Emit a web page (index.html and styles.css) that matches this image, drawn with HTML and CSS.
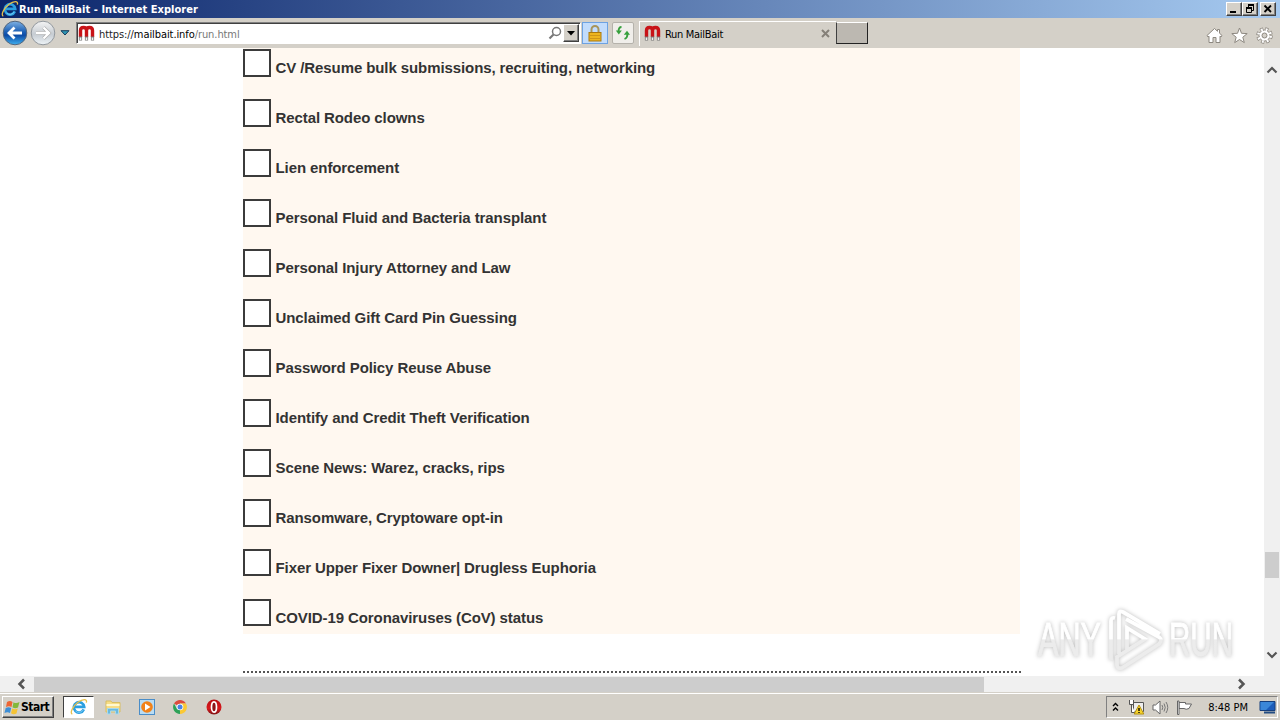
FILE: index.html
```html
<!DOCTYPE html>
<html lang="en">
<head>
    <meta charset="UTF-8">
    <title>Run MailBait - Internet Explorer</title>
    <link rel="stylesheet" href="styles.css">
</head>
<body>
    <svg class="defs" width="0" height="0">
        <defs>
            <linearGradient id="red" x1="0" y1="0" x2="0" y2="1">
                <stop offset="0" stop-color="#b80e12"/>
                <stop offset=".6" stop-color="#d8181c"/>
                <stop offset="1" stop-color="#7c1414"/>
            </linearGradient>
            <linearGradient id="blue" x1="0" y1="0" x2="0" y2="1">
                <stop offset="0" stop-color="#7fb2e4"/>
                <stop offset=".45" stop-color="#1c5fb4"/>
                <stop offset=".6" stop-color="#0c4ba6"/>
                <stop offset="1" stop-color="#3fb0f0"/>
            </linearGradient>
            <linearGradient id="silver" x1="0" y1="0" x2="0" y2="1">
                <stop offset="0" stop-color="#f4f4f4"/>
                <stop offset=".55" stop-color="#c6ccd2"/>
                <stop offset="1" stop-color="#eef4f8"/>
            </linearGradient>
            <linearGradient id="fade" gradientUnits="userSpaceOnUse" x1="0" y1="0" x2="0" y2="64">
                <stop offset=".48" stop-color="#fff"/>
                <stop offset=".5" stop-color="#ececec"/>
            </linearGradient>
            <symbol id="ie" viewBox="0 0 18 18">
                <path d="M13.800 11.400A5.200 5.200 0 1 1 14.200 8.900H5" fill="none" stroke="#2a9fe0" stroke-width="2.700"/>
                <path d="M13.300 11.800A4.900 4.900 0 0 1 5.500 13" fill="none" stroke="#8bd4f7" stroke-width=".8"/>
                <path d="M2.300 16.300C-.5 14.500 3 8.200 8 4.300C12.500.9 17.700.3 16.300 4.600" fill="none" stroke="#e6c04c" stroke-width="1.300"/>
            </symbol>
            <symbol id="magnet" viewBox="0 0 17 17">
                <path d="M2.500 12V5.500Q2.500 2.500 5.500 2.500Q8.500 2.500 8.500 5.500V12M8.500 5.500Q8.500 2.500 11.500 2.500Q14.500 2.500 14.500 5.500V12" fill="none" stroke="#c81318" stroke-width="3.400"/>
                <path d="M2.500 11.500V15.500M8.500 11.500V15.500M14.500 11.500V15.500" stroke="#777" stroke-width="3.200"/>
                <path d="M2.500 12.500V15M8.500 12.500V15M14.500 12.500V15" stroke="#eee" stroke-width="1.600"/>
            </symbol>
        </defs>
    </svg>

    <header class="titlebar">
        <svg class="title-icon" width="18" height="18"><use href="#ie"/></svg>
        <h1 class="title">Run MailBait - Internet Explorer</h1>
        <div class="win-buttons">
            <button class="win-btn"><svg width="14" height="12"><path d="M3 9H9" stroke="#000" stroke-width="2"/></svg></button>
            <button class="win-btn"><svg width="14" height="12"><path d="M5 2.500H11M10.500 2V7.500H9M5.500 2V4M3 5.500H9M3.500 5V9.500H8.500V5" fill="none" stroke="#000"/><path d="M5 2H11M3 5H9" stroke="#000" stroke-width="2"/></svg></button>
            <button class="win-btn close"><svg width="14" height="12"><path d="M3.500 2.500L10 9M10 2.500L3.500 9" stroke="#000" stroke-width="1.800"/></svg></button>
        </div>
    </header>

    <nav class="toolbar">
        <svg class="nav-icon" width="26" height="26" viewBox="0 0 26 26">
            <circle cx="13" cy="13" r="11.800" fill="url(#blue)" stroke="#52657c"/>
            <path d="M20 13H7.500M12.500 7.500L7 13L12.500 18.500" fill="none" stroke="#fff" stroke-width="2.800"/>
        </svg>
        <svg class="nav-icon" width="26" height="26" viewBox="0 0 26 26">
            <circle cx="13" cy="13" r="11.800" fill="url(#silver)" stroke="#92989e"/>
            <path d="M6 13H18.500M13.500 7.500L19 13L13.500 18.500" fill="none" stroke="#aaa" stroke-width="3.600"/>
            <path d="M6 13H18.500M13.500 7.500L19 13L13.500 18.500" fill="none" stroke="#fff" stroke-width="2.400"/>
        </svg>
        <svg class="nav-drop" width="10" height="6"><path d="M1 .7H9L5 5Z" fill="#2e96b4" stroke="#163c5c"/></svg>
        <div class="address">
            <svg class="favicon" width="17" height="17"><use href="#magnet"/></svg>
            <span class="url"><i>https://</i>mailbait.info<i>/run.html</i></span>
            <svg class="search" width="14" height="14"><circle cx="8.500" cy="5.500" r="4" fill="#fff" stroke="#777" stroke-width="1.500"/><path d="M5.500 8.500L1.500 12.500" stroke="#777" stroke-width="2.200"/></svg>
            <span class="drop-btn"><svg width="8" height="5"><path d="M0 0H8L4 4.500Z"/></svg></span>
        </div>
        <span class="lock">
            <svg width="14" height="17" viewBox="0 0 14 17"><path d="M3.500 8V4.500A3.500 3.500 0 0 1 10.500 4.500V8" fill="none" stroke="#a8955a" stroke-width="2"/><rect x="1" y="7.500" width="12" height="8.500" fill="#edb51f" stroke="#aa780e"/><path d="M1.500 10.500H12.500M1.500 13.500H12.500" stroke="#cf9618"/></svg>
        </span>
        <span class="refresh">
            <svg width="16" height="14"><path d="M6.500 1Q3.500 1 3.500 6" fill="none" stroke="#36a03c" stroke-width="1.800"/><path d="M.8 4.500H6.800L3.800 8.500Z" fill="#36a03c"/><path d="M9.500 13Q12.500 12 12.500 8" fill="none" stroke="#36a03c" stroke-width="1.800"/><path d="M8.800 8.700H15L12 4.700Z" fill="#36a03c"/></svg>
        </span>
        <div class="tab">
            <svg width="17" height="17"><use href="#magnet"/></svg>
            <span class="tab-name">Run MailBait</span>
            <svg class="tab-close" width="9" height="9"><path d="M1 1L8 8M8 1L1 8" stroke="#858078" stroke-width="2"/></svg>
        </div>
        <span class="new-tab"></span>
        <div class="tools">
            <svg width="17" height="17"><path d="M1 8.500L8.500 1.500L11.500 4.300V2.500H13.500V6.200L16 8.500L15 10L14 9.200V15.500H10V10.500H7V15.500H3V9.200L2 10Z" fill="#fff" stroke="#8d8880"/></svg>
            <svg width="17" height="17"><path d="M8.500 1L10.500 6.300L16.200 6.600L11.800 10.200L13.300 15.600L8.500 12.500L3.700 15.600L5.200 10.200L.8 6.600L6.500 6.300Z" fill="#fff" stroke="#8d8880"/></svg>
            <svg width="17" height="17" viewBox="0 0 17 17">
                <circle cx="8.500" cy="8.500" r="6.500" fill="none" stroke="#8d8880" stroke-width="3.500" stroke-dasharray="3 2.105"/>
                <circle cx="8.500" cy="8.500" r="5.500" fill="#fff" stroke="#8d8880"/>
                <circle cx="8.500" cy="8.500" r="6.200" fill="none" stroke="#fff" stroke-width="2.600" stroke-dasharray="1.800 3.070" stroke-dashoffset="-.5"/>
                <circle cx="8.500" cy="8.500" r="2.500" fill="#d4d0c8" stroke="#8d8880"/>
            </svg>
        </div>
    </nav>

    <div class="viewport">
        <main class="page">
            <ul class="topics">
                <li><span class="check"></span><label>CV /Resume bulk submissions, recruiting, networking</label></li>
                <li><span class="check"></span><label>Rectal Rodeo clowns</label></li>
                <li><span class="check"></span><label>Lien enforcement</label></li>
                <li><span class="check"></span><label>Personal Fluid and Bacteria transplant</label></li>
                <li><span class="check"></span><label>Personal Injury Attorney and Law</label></li>
                <li><span class="check"></span><label>Unclaimed Gift Card Pin Guessing</label></li>
                <li><span class="check"></span><label>Password Policy Reuse Abuse</label></li>
                <li><span class="check"></span><label>Identify and Credit Theft Verification</label></li>
                <li><span class="check"></span><label>Scene News: Warez, cracks, rips</label></li>
                <li><span class="check"></span><label>Ransomware, Cryptoware opt-in</label></li>
                <li><span class="check short"></span><label>Fixer Upper Fixer Downer| Drugless Euphoria</label></li>
                <li><span class="check short"></span><label>COVID-19 Coronaviruses (CoV) status</label></li>
            </ul>
            <div class="divider"></div>
        </main>
        <div class="vscroll">
            <svg width="12" height="8"><path d="M1.500 6.500L6 2L10.500 6.500" fill="none" stroke="#555" stroke-width="2.200"/></svg>
            <span class="vthumb"></span>
            <svg width="12" height="8"><path d="M1.500 1.500L6 6L10.500 1.500" fill="none" stroke="#555" stroke-width="2.200"/></svg>
        </div>
        <svg class="watermark" width="200" height="64" viewBox="0 0 200 64">
            <g fill="url(#fade)" stroke="url(#fade)">
                <text x="1" y="48" textLength="63" lengthAdjust="spacingAndGlyphs">ANY</text>
                <text x="132" y="48" textLength="64" lengthAdjust="spacingAndGlyphs">RUN</text>
            </g>
            <path d="M74 52V13Q74 9 78 10M82 46V6Q82 2 86 4L123 26M90 43V20L108 31L80 49V57Q80 61 85 60L122 36Q126 32 122 29L89 11" fill="none" stroke="url(#fade)" stroke-width="3.800"/>
        </svg>
    </div>

    <div class="hscroll">
        <svg width="10" height="12"><path d="M8 1.500L3.500 6L8 10.500" fill="none" stroke="#555" stroke-width="2.500"/></svg>
        <span class="hthumb"></span>
        <svg class="right" width="10" height="12"><path d="M2 1.500L6.500 6L2 10.500" fill="none" stroke="#555" stroke-width="2.500"/></svg>
    </div>

    <footer class="taskbar">
        <button class="start">
            <svg width="17" height="17" viewBox="0 0 17 17">
                <path d="M3 3Q6 1 8.500 3L7.500 8Q5 6.500 2 8Z" fill="#ed6534"/>
                <path d="M9.500 3.200Q12 5 15.500 3L14 8.500Q11 10 8.500 8.300Z" fill="#83b83b"/>
                <path d="M1.700 9Q4.500 7.500 7.200 9L6 14Q3.500 12.500.5 14Z" fill="#3d8ed6"/>
                <path d="M8.200 9.400Q11 11 13.700 9.500L12.500 14.500Q9.500 16 7 14.300Z" fill="#f5c334"/>
            </svg>
            <span>Start</span>
        </button>
        <div class="task active"><svg width="18" height="18"><use href="#ie"/></svg></div>
        <svg class="task-icon folder" width="16" height="16"><path d="M1 2H6L7 3.500H15V13H1Z" fill="#f7dd85" stroke="#d8bd62"/><path d="M1.500 6H14.500" stroke="#fff8cf" stroke-width="2"/><path d="M2.500 15V9.500H13.500V15H10.500V12H5.500V15Z" fill="#69b9df" stroke="#a9d9ec"/></svg>
        <svg class="task-icon player" width="16" height="16"><rect x=".5" y=".5" width="15" height="15" fill="#b9dcf3" stroke="#4a8dc8"/><circle cx="8" cy="8" r="5.800" fill="#f28218"/><path d="M6 4.500L11.500 8L6 11.500Z" fill="#fff"/></svg>
        <svg class="task-icon chrome" width="14" height="14" viewBox="0 0 14 14"><path d="M7 7L1 3.500A7 7 0 0 1 13 3.500H7Z" fill="#dd4b3e"/><path d="M7 7L7 3.500H13A7 7 0 0 1 7 14Z" fill="#fbc934"/><path d="M7 7L7 14A7 7 0 0 1 1 3.500L4 9Z" fill="#2da158"/><circle cx="7" cy="7" r="3.300" fill="#fff"/><circle cx="7" cy="7" r="2.500" fill="#4a83e5"/></svg>
        <svg class="task-icon opera" width="16" height="16"><circle cx="8" cy="8" r="7.500" fill="url(#red)"/><ellipse cx="8" cy="8" rx="2.500" ry="5.200" fill="#8c1518" stroke="#fff" stroke-width="1.700"/></svg>
        <div class="tray">
            <svg class="chevrons" width="7" height="10"><path d="M1 4L3.500 1.500L6 4M1 8.500L3.500 6L6 8.500" fill="none" stroke="#000" stroke-width="1.400"/></svg>
            <svg class="net" width="17" height="16"><path d="M5.500 3.500H15.500V12.500H5.500Z" fill="#eee" stroke="#555"/><path d="M1.500 1V5.500H5.500V1M3.500 5V13.500H7" fill="#fff" stroke="#555"/><path d="M11 6L15.800 15H6.200Z" fill="#f6d32c" stroke="#b49112"/><path d="M11 9V12M11 13V14" stroke="#000" stroke-width="1.400"/></svg>
            <svg class="sound" width="17" height="15"><path d="M1 5H3.500L8 1V14L3.500 10H1Z" fill="#fff" stroke="#666"/><path d="M10 5Q11.500 7.500 10 10M12 3.500Q14.500 7.500 12 11.500M14 2Q17.500 7.500 14 13" fill="none" stroke="#777"/></svg>
            <svg class="flag" width="17" height="15"><path d="M3 2.500H9.500V4H15.500L13 8.500Q10 10 8 8.500H3Z" fill="#fff" stroke="#666"/><path d="M1.500 1V14.500H3V1Z" fill="#fff" stroke="#666"/></svg>
            <time>8:48 PM</time>
            <svg class="desktop" width="17" height="14"><path d="M1 1.500H16V10.500H1Z" fill="#1b5cba" stroke="#153e7c"/><path d="M1.500 2H15L7 10H1.500Z" fill="#3b87d8"/><path d="M5 12.500H16" stroke="#234c82" stroke-width="2"/></svg>
        </div>
    </footer>
</body>
</html>
```
FILE: styles.css
```css
*{
    margin: 0;
    padding: 0;
    box-sizing: border-box;
}

body{
    width: 1280px;
    height: 720px;
    overflow: hidden;
    display: flex;
    flex-direction: column;
    background: #fff;
    font: 11px "DejaVu Sans Condensed", "DejaVu Sans", sans-serif;
    color: #000;
}

svg{
    display: block;
    flex-shrink: 0;
}

.defs{
    position: absolute;
}

/* window caption */
.titlebar{
    height: 18px;
    flex-shrink: 0;
    display: flex;
    align-items: center;
    padding: 0 4px 0 1px;
    background: linear-gradient(to right, #0a246a, #a6caf0);
}

.title{
    font-size: 11px;
    letter-spacing: 0.04px;
    color: #fff;
    white-space: nowrap;
}

.win-buttons{
    display: flex;
    margin-left: auto;
}

.win-btn{
    width: 16px;
    height: 14px;
    background: #d4d0c8;
    border: 1px solid;
    border-color: #fff #404040 #404040 #fff;
    box-shadow: inset -1px -1px #808080;
}

.close{
    margin-left: 2px;
}

/* address bar and tabs */
.toolbar{
    height: 30px;
    flex-shrink: 0;
    display: flex;
    align-items: center;
    padding: 0 8px 0 2px;
    background: #d4d0c8;
}

.nav-icon{
    margin-right: 2px;
}

.nav-drop{
    margin-left: 2px;
}

.address{
    width: 505px;
    height: 22px;
    margin-left: 6px;
    display: flex;
    align-items: center;
    padding: 0 1px;
    background: #fff;
    border: 1px solid;
    border-color: #808080 #fff #fff #808080;
    box-shadow: inset 1px 1px #404040;
}

.url{
    margin-left: 4px;
    padding-top: 2px;
    letter-spacing: -0.08px;
}

.url i{
    font-style: normal;
    color: #777;
}

.url i:first-child{
    color: #222;
}

.search{
    margin-left: auto;
}

.drop-btn{
    width: 16px;
    height: 18px;
    margin-left: 1px;
    display: flex;
    align-items: center;
    justify-content: center;
    background: #d4d0c8;
    border: 1px solid;
    border-color: #fff #404040 #404040 #fff;
    box-shadow: inset -1px -1px #808080;
}

.lock,
.refresh{
    height: 22px;
    display: flex;
    align-items: center;
    justify-content: center;
}

.lock{
    width: 26px;
    margin-left: 1px;
    background: #c2dcfc;
    border: 1px solid #6da2e2;
}

.refresh{
    width: 22px;
    margin-left: 4px;
    background: #f0eeea;
    border: 1px solid #b5b2ab;
    border-radius: 2px;
}

.tab{
    width: 197px;
    height: 25px;
    margin-left: 5px;
    padding: 0 6px 0 4px;
    display: flex;
    align-items: center;
    border-top: 1px solid #fff;
    border-left: 1px solid #fff;
}

.tab-name{
    margin-left: 4px;
    padding-top: 2px;
    letter-spacing: -0.3px;
}

.tab-close{
    margin-left: auto;
}

.new-tab{
    width: 32px;
    height: 22px;
    background: #bcb8b1;
    border: 1px solid;
    border-color: #fff #222 #222 #404040;
}

.tools{
    display: flex;
    gap: 8px;
    margin: 4px -1px 0 auto;
}

/* page */
.viewport{
    height: 628px;
    flex-shrink: 0;
    display: flex;
    position: relative;
}

.page{
    flex: 1;
    padding-left: 243px;
}

.topics{
    width: 777px;
    height: 586px;
    padding-top: 1px;
    list-style: none;
    background: #fff8f0;
}

.topics li{
    height: 50px;
    display: flex;
    font: bold 15px "Liberation Sans", Arial, sans-serif;
    letter-spacing: -0.09px;
    color: #333;
}

.topics label{
    margin-left: 4.5px;
    line-height: 37px;
    white-space: nowrap;
}

.check{
    width: 28px;
    height: 28px;
    background: #fff;
    border: 2px solid #3b3b3b;
}

.short{
    height: 27px;
}

.divider{
    width: 778px;
    height: 2px;
    margin-top: 37px;
    background: repeating-linear-gradient(to right, #555 0 2px, #fff 2px 4px);
}

.vscroll{
    width: 16px;
    display: flex;
    flex-direction: column;
    align-items: center;
    padding: 18px 0 17px;
    background: #f0f0f0;
}

.vthumb{
    width: 14px;
    height: 26px;
    margin: 478px 0 auto;
    background: #cdcdcd;
}

.watermark{
    position: absolute;
    left: 1037px;
    top: 560px;
    overflow: visible;
    font: 49px "Liberation Sans", Arial, sans-serif;
    filter: drop-shadow(0 0 2px #bbb);
}

.hscroll{
    height: 16px;
    flex-shrink: 0;
    display: flex;
    align-items: center;
    padding: 0 33px 0 16px;
    background: #f0f0f0;
}

.hthumb{
    width: 950px;
    height: 15px;
    margin-left: 8px;
    background: #cdcdcd;
}

.right{
    margin-left: auto;
}

/* taskbar */
.taskbar{
    height: 28px;
    flex-shrink: 0;
    display: flex;
    align-items: center;
    padding: 1px 2px 0;
    background: #d4d0c8;
    border-top: 1px solid #d4d0c8;
    box-shadow: inset 0 1px #fff;
}

.start{
    width: 52px;
    height: 22px;
    display: flex;
    align-items: center;
    padding-left: 1px;
    background: #d4d0c8;
    border: 1px solid;
    border-color: #fff #404040 #404040 #fff;
    box-shadow: inset -1px -1px #808080;
    font: bold 12px "DejaVu Sans Condensed", sans-serif;
    letter-spacing: -0.5px;
    color: #000;
}

.task{
    width: 31px;
    height: 22px;
    margin-left: 9px;
    display: flex;
    align-items: center;
    justify-content: center;
}

.active{
    background: #fff;
    border: 1px solid;
    border-color: #404040 #fff #fff #404040;
}

.folder{
    margin-left: 11px;
}

.player{
    margin-left: 18px;
}

.chrome{
    margin-left: 18px;
}

.opera{
    margin-left: 19px;
}

.tray{
    width: 172px;
    height: 22px;
    margin-left: auto;
    padding: 0 1px 0 5px;
    display: flex;
    align-items: center;
    border: 1px solid;
    border-color: #808080 #fff #fff #808080;
}

.net{
    margin-left: 9px;
}

.sound,
.flag{
    margin-left: 7px;
}

.tray time{
    margin-left: auto;
}

.desktop{
    margin-left: 11px;
}
```
